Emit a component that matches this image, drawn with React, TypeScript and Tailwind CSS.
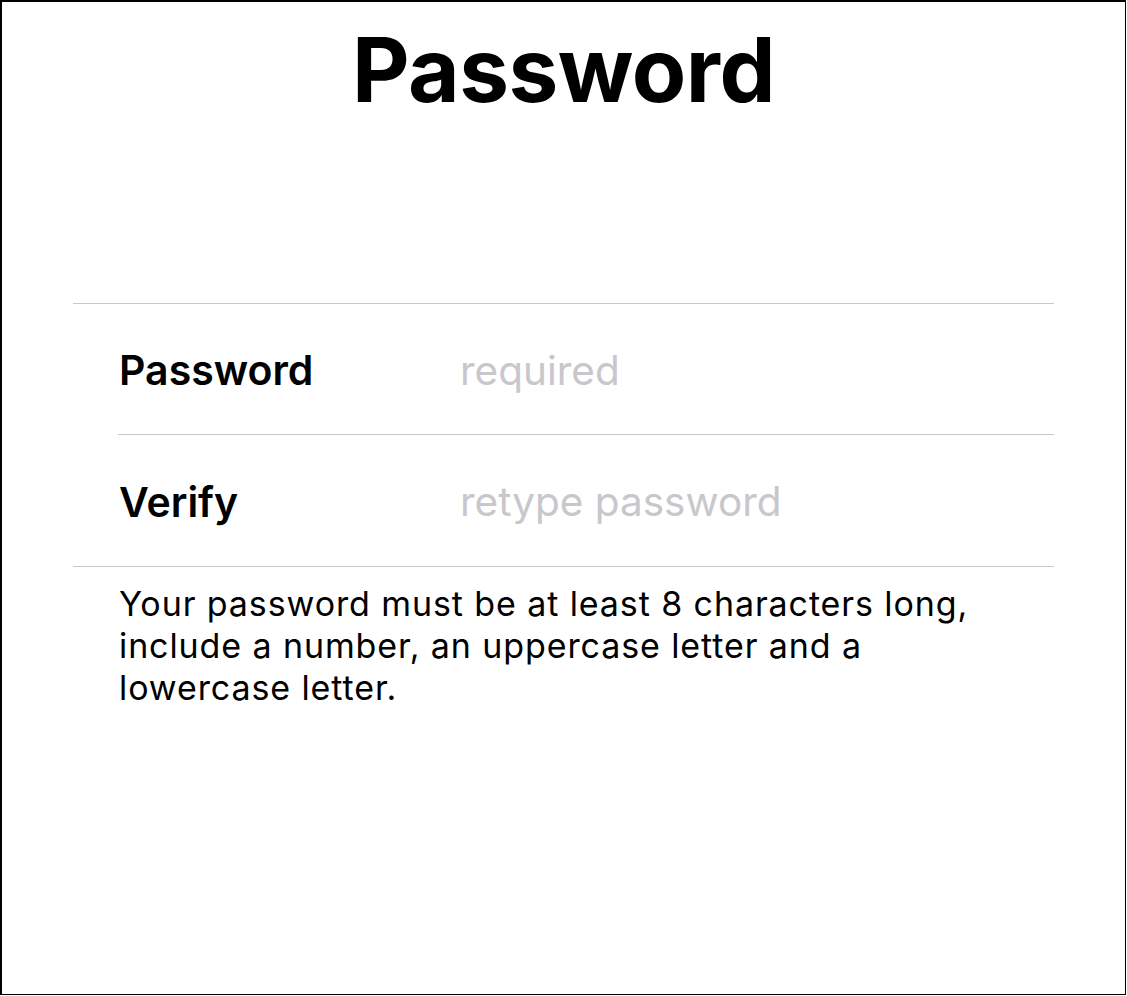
import React from "react";

function Field({ label, placeholder, divider }: { label: string; placeholder: string; divider?: boolean }) {
  return (
    <div className={`ml-[45px] flex h-[131px] items-center pt-[4px] ${divider ? "border-b border-[#c8c7cc]" : ""}`}>
      <span className="w-[342px] shrink-0 pl-[1px] text-[41px] font-semibold text-black">{label}</span>
      <input
        type="password"
        placeholder={placeholder}
        className="min-w-0 flex-1 bg-transparent text-[40.5px] text-black outline-none placeholder:text-[#c7c7cc]"
      />
    </div>
  );
}

export default function App() {
  return (
    <div className="h-[995px] w-[1126px] border-t-2 border-l-2 border-r border-b border-black bg-white font-['Inter',sans-serif]">
      <h1 className="pt-[23px] text-center text-[89px] font-bold leading-none tracking-[-0.5px] text-black">Password</h1>
      <div className="mx-[71px] mt-[189px]">
        <div className="border-y border-[#c8c7cc]">
          <Field label="Password" placeholder="required" divider />
          <Field label="Verify" placeholder="retype password" />
        </div>
        <p className="ml-[46px] mr-[60px] mt-[16px] text-[34px] leading-[42px] tracking-[0.9px] text-black">
          Your password must be at least 8 characters long, include a number, an uppercase letter and a lowercase letter.
        </p>
      </div>
    </div>
  );
}
